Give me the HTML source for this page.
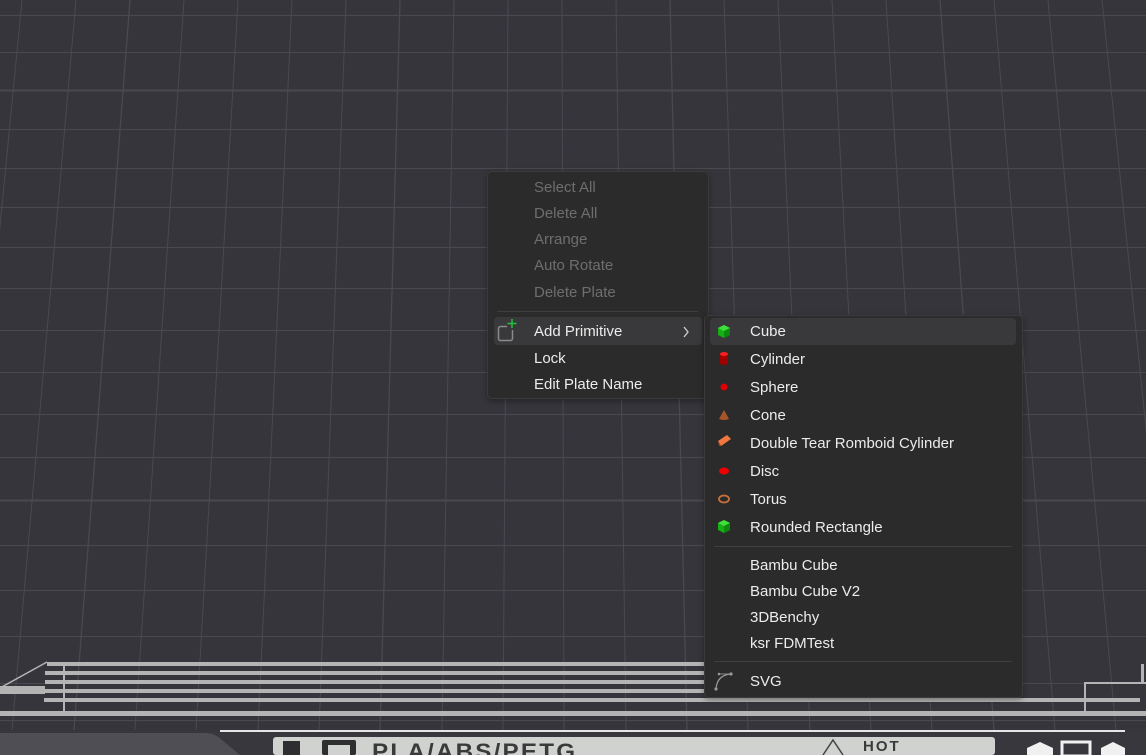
<!DOCTYPE html>
<html><head><meta charset="utf-8">
<style>
*{margin:0;padding:0;box-sizing:border-box}
html,body{width:1146px;height:755px;overflow:hidden;background:#36353b;font-family:"Liberation Sans",sans-serif}
#wrap{position:relative;width:1146px;height:755px;overflow:hidden}
.abs{position:absolute}
.menu{position:absolute;background:#2b2b2b;border:1px solid #3b3b3d;border-radius:5px;box-shadow:0 2px 6px rgba(0,0,0,.35)}
.it{position:absolute;font-size:15px;line-height:20px;height:20px;white-space:nowrap}
.dis{color:#6e6e6e}
.en{color:#ececec}
.sep{position:absolute;height:1px;background:#3f3f41}
</style></head><body><div id="wrap">
<svg class="abs" style="left:0;top:0" width="1146" height="755">
<g stroke="#4a4950" stroke-width="1">
<line x1="0" y1="15.5" x2="1146" y2="15.5"/>
<line x1="0" y1="52.5" x2="1146" y2="52.5"/>
<line x1="0" y1="90.5" x2="1146" y2="90.5" stroke-width="2"/>
<line x1="0" y1="129.5" x2="1146" y2="129.5"/>
<line x1="0" y1="168.5" x2="1146" y2="168.5"/>
<line x1="0" y1="207.5" x2="1146" y2="207.5"/>
<line x1="0" y1="247.5" x2="1146" y2="247.5"/>
<line x1="0" y1="288.5" x2="1146" y2="288.5"/>
<line x1="0" y1="330.5" x2="1146" y2="330.5"/>
<line x1="0" y1="372.5" x2="1146" y2="372.5"/>
<line x1="0" y1="414.5" x2="1146" y2="414.5"/>
<line x1="0" y1="457.5" x2="1146" y2="457.5"/>
<line x1="0" y1="500.5" x2="1146" y2="500.5" stroke-width="2"/>
<line x1="0" y1="545.5" x2="1146" y2="545.5"/>
<line x1="0" y1="590.5" x2="1146" y2="590.5"/>
<line x1="0" y1="636.5" x2="1146" y2="636.5"/>
<line x1="0" y1="683.5" x2="1146" y2="683.5"/>
<line x1="0" y1="720.5" x2="1146" y2="720.5"/>
<line x1="22" y1="0" x2="-49" y2="730"/>
<line x1="76" y1="0" x2="12" y2="730"/>
<line x1="130" y1="0" x2="74" y2="730" stroke-width="1.3"/>
<line x1="184" y1="0" x2="135" y2="730"/>
<line x1="238" y1="0" x2="196" y2="730"/>
<line x1="292" y1="0" x2="258" y2="730"/>
<line x1="346" y1="0" x2="319" y2="730"/>
<line x1="400" y1="0" x2="380" y2="730" stroke-width="1.3"/>
<line x1="454" y1="0" x2="442" y2="730"/>
<line x1="508" y1="0" x2="503" y2="730"/>
<line x1="562" y1="0" x2="564" y2="730"/>
<line x1="616" y1="0" x2="626" y2="730"/>
<line x1="670" y1="0" x2="687" y2="730" stroke-width="1.3"/>
<line x1="724" y1="0" x2="748" y2="730"/>
<line x1="778" y1="0" x2="810" y2="730"/>
<line x1="832" y1="0" x2="871" y2="730"/>
<line x1="886" y1="0" x2="932" y2="730"/>
<line x1="940" y1="0" x2="994" y2="730" stroke-width="1.3"/>
<line x1="994" y1="0" x2="1055" y2="730"/>
<line x1="1048" y1="0" x2="1116" y2="730"/>
<line x1="1102" y1="0" x2="1177" y2="730"/>
</g>
<g fill="#b4b4b4">
<rect x="47" y="662" width="660" height="4"/>
<rect x="45" y="671" width="662" height="4"/>
<rect x="45" y="680" width="662" height="4"/>
<rect x="45" y="689" width="662" height="4"/>
<rect x="44" y="698" width="1096" height="4"/>
<rect x="0" y="711" width="1146" height="5"/>
<rect x="0" y="686" width="45" height="8"/>
<rect x="63" y="666" width="2" height="45"/>
<rect x="1084" y="683" width="2" height="29"/>
<rect x="1084" y="682" width="62" height="2"/>
<rect x="1141" y="664" width="3" height="19"/>
</g>
<line x1="0" y1="688" x2="47" y2="662" stroke="#b4b4b4" stroke-width="1.5"/>
<rect x="0" y="731" width="1146" height="24" fill="#38373d"/>
<rect x="220" y="730" width="905" height="2" fill="#e6e6e6"/>
<path d="M0 733 L205 733 Q215 733 222 740 L240 755 L0 755 Z" fill="#4f4e54"/>
<rect x="273" y="737" width="722" height="18" rx="3" fill="#d0d2d0"/>
<rect x="283" y="741" width="17" height="14" fill="#2e2e30"/>
<rect x="322" y="740" width="34" height="15" rx="2" fill="#2e2e30"/>
<rect x="328" y="745" width="22" height="10" fill="#d0d2d0"/>
<path d="M823 755 L833 740 L843 755" fill="none" stroke="#444" stroke-width="1.5"/>
<path d="M1027 755 L1027 748 L1040 742 L1053 748 L1053 755 Z" fill="#f0f0f0"/>
<rect x="1062" y="742" width="28" height="14" fill="none" stroke="#f0f0f0" stroke-width="3"/>
<path d="M1101 755 L1101 748 L1113 742 L1125 748 L1125 755 Z" fill="#f0f0f0"/>
</svg>
<div class="abs" style="left:372px;top:739px;font-size:22px;letter-spacing:2px;color:#3a3a3a;line-height:26px;font-weight:bold;transform:scaleX(1.1);transform-origin:left">PLA/ABS/PETG</div>
<div class="abs" style="left:863px;top:738px;font-size:15px;letter-spacing:2px;color:#3a3a3a;line-height:18px;font-weight:bold">HOT</div>

<div class="menu" style="left:487px;top:171px;width:222px;height:228px"></div>
<div class="it dis" style="left:534px;top:178px">Select All</div>
<div class="it dis" style="left:534px;top:204px">Delete All</div>
<div class="it dis" style="left:534px;top:230px">Arrange</div>
<div class="it dis" style="left:534px;top:256px">Auto Rotate</div>
<div class="it dis" style="left:534px;top:283px">Delete Plate</div>
<div class="sep" style="left:497px;top:311px;width:201px"></div>
<div class="abs" style="left:494px;top:317px;width:208px;height:28px;background:#39393b;border-radius:4px"></div>
<svg class="abs" style="left:496px;top:318px" width="24" height="26">
<rect x="2.5" y="8.5" width="14" height="14" rx="2" fill="none" stroke="#8a8a8a" stroke-width="1.5"/>
<rect x="11" y="4" width="8" height="8" fill="#39393b"/>
<path d="M16 1 V10 M11.5 5.5 H20.5" stroke="#22c33a" stroke-width="1.5"/>
</svg>
<div class="it en" style="left:534px;top:322px">Add Primitive</div>
<svg class="abs" style="left:681px;top:325px" width="10" height="14"><path d="M3 2 L7 7 L3 12" fill="none" stroke="#d0d0d0" stroke-width="1.3"/></svg>
<div class="it en" style="left:534px;top:349px">Lock</div>
<div class="it en" style="left:534px;top:375px">Edit Plate Name</div>

<div class="menu" style="left:704px;top:315px;width:319px;height:383px"></div>
<div class="abs" style="left:710px;top:318px;width:306px;height:27px;background:#39393b;border-radius:4px"></div>
<svg class="abs" style="left:714px;top:320px" width="24" height="230">
<path d="M10 5 L16 8 L16 15 L10 18 L4 15 L4 8 Z" fill="#16b016"/><path d="M4 8 L10 11 L16 8 L10 5 Z" fill="#3ee03e"/><path d="M10 11 L10 18 L16 15 L16 8 Z" fill="#0c8a0c"/>
<rect x="6" y="34" width="8" height="9" fill="#a00000"/><ellipse cx="10" cy="34" rx="4" ry="2" fill="#ff2020"/><ellipse cx="10" cy="43" rx="4" ry="2" fill="#a00000"/>
<circle cx="10" cy="67" r="3.5" fill="#e00000"/>
<path d="M10 90 L15 99 Q10 101 5 99 Z" fill="#a8552c"/>
<path d="M4 121 L13 115 L17 119 L7 126 Z" fill="#f07840"/><path d="M4 121 L7 126 L5 126 Z" fill="#a04020"/>
<ellipse cx="10" cy="151" rx="5" ry="3.5" fill="#ee0000"/>
<ellipse cx="10" cy="179" rx="5" ry="3.5" fill="none" stroke="#c8703a" stroke-width="1.8"/>
<path d="M10 200 L16 203 L16 210 L10 213 L4 210 L4 203 Z" fill="#16b016"/><path d="M4 203 L10 206 L16 203 L10 200 Z" fill="#3ee03e"/><path d="M10 206 L10 213 L16 210 L16 203 Z" fill="#0c8a0c"/>
</svg>
<div class="it en" style="left:750px;top:322px">Cube</div>
<div class="it en" style="left:750px;top:350px">Cylinder</div>
<div class="it en" style="left:750px;top:378px">Sphere</div>
<div class="it en" style="left:750px;top:406px">Cone</div>
<div class="it en" style="left:750px;top:434px">Double Tear Romboid Cylinder</div>
<div class="it en" style="left:750px;top:462px">Disc</div>
<div class="it en" style="left:750px;top:490px">Torus</div>
<div class="it en" style="left:750px;top:518px">Rounded Rectangle</div>
<div class="sep" style="left:714px;top:546px;width:298px"></div>
<div class="it en" style="left:750px;top:556px">Bambu Cube</div>
<div class="it en" style="left:750px;top:582px">Bambu Cube V2</div>
<div class="it en" style="left:750px;top:608px">3DBenchy</div>
<div class="it en" style="left:750px;top:634px">ksr FDMTest</div>
<div class="sep" style="left:714px;top:661px;width:298px"></div>
<svg class="abs" style="left:712px;top:670px" width="24" height="24">
<path d="M4 19 Q5 5 19 4" fill="none" stroke="#9a9a9a" stroke-width="1.2"/>
<circle cx="4" cy="19" r="1.6" fill="#9a9a9a"/><circle cx="19" cy="4" r="1.6" fill="#9a9a9a"/><circle cx="7" cy="4" r="1.3" fill="#9a9a9a"/>
<path d="M7 4 H19" stroke="#9a9a9a" stroke-width="0.8"/>
</svg>
<div class="it en" style="left:750px;top:672px">SVG</div>
</div></body></html>
